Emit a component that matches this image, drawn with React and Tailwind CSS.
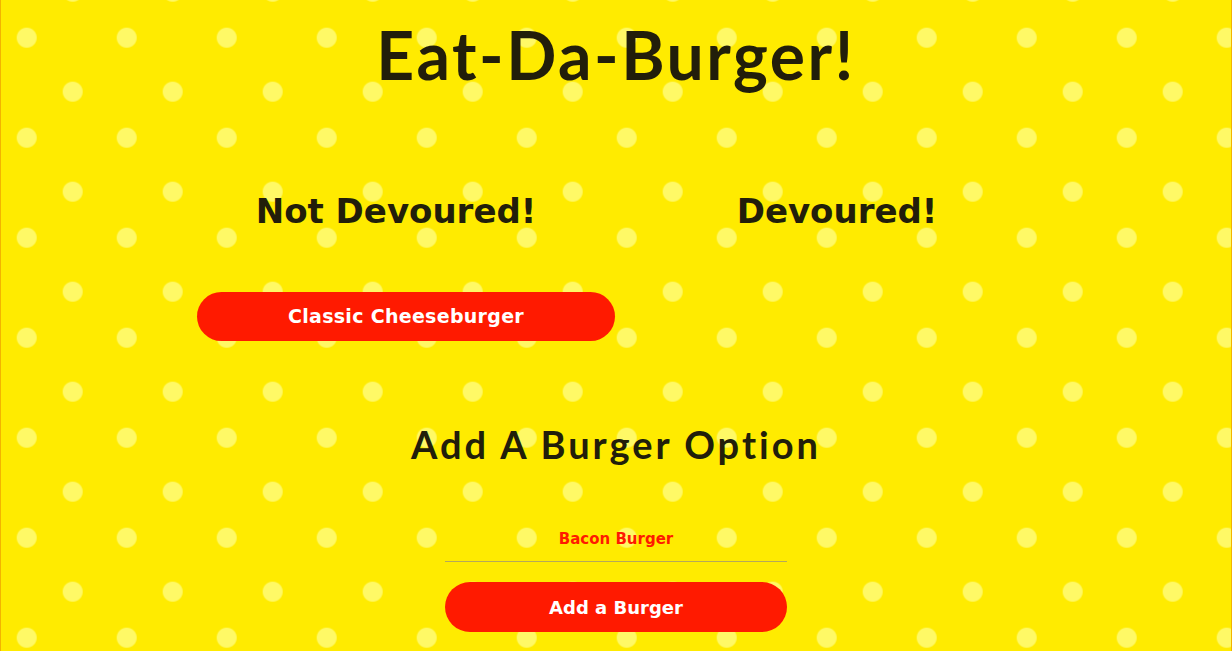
export default function App() {
  return (
    <div className="min-h-screen w-full border-x border-[#f3b400] bg-[#ffeb00] bg-[radial-gradient(circle_at_center,#fff966_9.5px,transparent_10.5px),radial-gradient(circle_at_center,#fff966_9.5px,transparent_10.5px)] bg-[length:100px_100px] bg-[position:-24.3px_-12.3px,21.7px_41.7px] text-[#221e0a]">
      <div className="mx-auto flex w-[840px] flex-col items-center pt-[15px]">
        <h1 className="text-[66px] font-bold leading-[80px] tracking-[2.5px] [font-family:'Lato',sans-serif]">
          Eat-Da-Burger!
        </h1>

        <div className="mt-[94px] grid w-full grid-cols-2">
          <div className="flex flex-col items-center">
            <h2 className="pr-[20px] text-[34px] font-bold leading-[44px] [font-family:'DejaVu_Sans',sans-serif]">
              Not Devoured!
            </h2>
            <button className="mt-[59px] h-[49px] w-[418px] rounded-full bg-[#ff1a00] text-[19px] font-bold tracking-[0.3px] text-white [font-family:'DejaVu_Sans',sans-serif]">
              Classic Cheeseburger
            </button>
          </div>
          <div className="flex flex-col items-center">
            <h2 className="pl-[22px] text-[34px] font-bold leading-[44px] [font-family:'DejaVu_Sans',sans-serif]">
              Devoured!
            </h2>
          </div>
        </div>

        <h2 className="mt-[80px] text-[38px] font-bold leading-[46px] tracking-[3px] [font-family:'Lato',sans-serif]">
          Add A Burger Option
        </h2>

        <div className="mt-[58px] flex w-[342px] flex-col items-center">
          <input
            type="text"
            defaultValue="Bacon Burger"
            className="h-[37px] w-full border-b border-[#b5a85a] bg-transparent pb-[8px] text-center text-[15px] font-bold text-[#ff1a00] outline-none [font-family:'DejaVu_Sans',sans-serif]"
          />
          <button className="mt-[20px] h-[50px] w-full rounded-full bg-[#ff1a00] text-[18px] font-bold text-white [font-family:'DejaVu_Sans',sans-serif]">
            Add a Burger
          </button>
        </div>
      </div>
    </div>
  );
}
